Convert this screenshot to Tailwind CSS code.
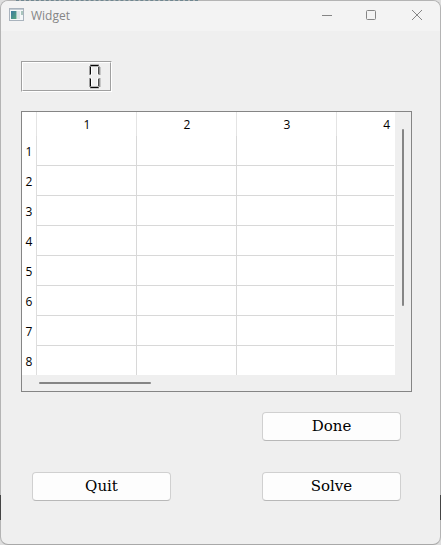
<!DOCTYPE html>
<html lang="en">
<head>
<meta charset="utf-8">
<title>Widget</title>
<script src="https://cdn.jsdelivr.net/npm/@tailwindcss/browser@4"></script>
</head>
<body class="w-[441px] h-[545px] overflow-hidden bg-[#dedede] font-['Open_Sans','Noto_Sans',sans-serif]">
<div class="relative w-[441px] h-[545px]">
  <main class="relative w-[441px] h-[545px] rounded-[8px] border border-[#b4b4b4] border-b-[#a8a8a8] bg-[#efefef] bg-clip-padding overflow-hidden flex flex-col">
    <header class="h-[30px] shrink-0 bg-[#f3f3f3] flex items-center pl-2">
      <svg class="w-[15px] h-[13px] shrink-0 -mt-[3px]" viewBox="0 0 15 13">
        <defs><linearGradient id="g" x2="1" y2="1"><stop stop-color="#397aa0"/><stop offset="1" stop-color="#56a67d"/></linearGradient></defs>
        <rect x=".5" y=".5" width="14" height="12" fill="#f4f7f8" stroke="#a9b3bd"/>
        <path d="M1 1.5h13" stroke="#c3ccd3"/>
        <rect x="2" y="3" width="5.5" height="8" fill="url(#g)"/>
        <rect x="8" y="3" width="3" height="8" fill="#dce4e7"/>
        <rect x="12" y="3" width="2" height="4" fill="#a9c5bd"/>
      </svg>
      <span class="ml-[7px] text-[12px] leading-[16px] text-[#858585]">Widget</span>
      <svg class="ml-auto mr-[14px] w-[104px] h-[12px] shrink-0 -mt-[2px]" viewBox="0 0 104 12" fill="none" stroke="#858585">
        <path d="M0 6.5h10"/>
        <rect x="44.5" y="1.5" width="9" height="9" rx="1"/>
        <path d="M90 1l10 10M100 1l-10 10"/>
      </svg>
    </header>

    <!-- LCD number -->
    <div class="ml-5 mt-[30px] w-[91px] h-[31px] shrink-0 border border-t-[#a0a0a0] border-l-[#a0a0a0] border-b-white border-r-white">
      <div class="w-full h-full border border-t-white border-l-white border-b-[#a0a0a0] border-r-[#a0a0a0] flex justify-end pr-[9px] pt-[1px]">
        <svg class="w-[13px] h-[25px]" viewBox="0 0 13 25" role="img" aria-label="0">
          <g fill="none" stroke="#a0a0a0">
            <path d="M1.5 2v9M1.5 14v9M12 3v8M12 14v9M2 24h9M2 .8h9"/>
          </g>
          <g fill="none" stroke="#fff"><path d="M3.5 3v8M3.5 14v7M9.5 3v8M9.5 14v7"/></g>
          <path d="M2 1h9l-1 1.3H3zM3 22.7h7l1 1.3H2zM2 2l1 1v7l-1 1zM11.3 2L10.3 3v7l1 1zM2 14l1 1v7l-1 1zM11.3 14l-1 1v7l1 1z" fill="#080808"/>
        </svg>
      </div>
    </div>

    <!-- table -->
    <section class="ml-5 mt-[19px] w-[391px] h-[281px] shrink-0 border border-[#858585] grid grid-cols-[373px_16px] grid-rows-[263px_16px]">
      <div class="bg-white overflow-hidden text-[12px] text-black">
        <div class="grid grid-cols-[15px_100px_100px_100px_58px] grid-rows-[24px] h-6 leading-[26px] text-center">
          <div class="border-r border-[#e4e4e4]"></div>
          <div class="border-r border-[#e4e4e4] pl-px">1</div>
          <div class="border-r border-[#e4e4e4] pl-px">2</div>
          <div class="border-r border-[#e4e4e4] pl-px">3</div>
          <div class="text-right pr-[5px]">4</div>
        </div>
        <div id="rows"></div>
      </div>
      <div class="pl-[7px] pt-[17px]"><div class="w-[2px] h-[177px] rounded-full bg-[#858585]"></div></div>
      <div class="pl-[17px] pt-[7px]"><div class="w-[112px] h-[2px] rounded-full bg-[#858585]"></div></div>
      <div></div>
    </section>

    <div class="pl-[31px] pr-[39px] mt-5 grid grid-cols-[139px_139px] justify-between gap-y-[31px] font-['DejaVu_Serif',serif] text-[15px] leading-[27px] text-black">
      <button class="col-start-2 h-[29px] rounded-[4px] border border-[#d0d0d0] border-b-[#b8b8b8] bg-[#fdfdfd]">Done</button>
      <button class="col-start-1 h-[29px] rounded-[4px] border border-[#d0d0d0] border-b-[#b8b8b8] bg-[#fdfdfd]">Quit</button>
      <button class="h-[29px] rounded-[4px] border border-[#d0d0d0] border-b-[#b8b8b8] bg-[#fdfdfd]">Solve</button>
    </div>
  </main>
  <!-- slivers of the content behind the window -->
  <div class="absolute left-0 top-[495px] w-px h-[25px] bg-[#444]"></div>
  <div class="absolute right-0 top-[495px] w-px h-[25px] bg-[#444]"></div>
  <div class="absolute left-[16px] top-0 w-[182px] border-t border-dashed border-[#6f8791]"></div>
</div>
<script>
  const cell = '<div class="border-r border-b border-[#d8d8d8]"></div>';
  document.getElementById('rows').innerHTML = [1,2,3,4,5,6,7,8].map(n =>
    '<div class="grid grid-cols-[15px_100px_100px_100px_57px] grid-rows-[30px] h-[30px] leading-[32px]">' +
    '<div class="border-r border-[#dedede] text-center">' + n + '</div>' + cell + cell + cell +
    '<div class="border-b border-[#d8d8d8]"></div></div>').join('');
</script>
</body>
</html>
